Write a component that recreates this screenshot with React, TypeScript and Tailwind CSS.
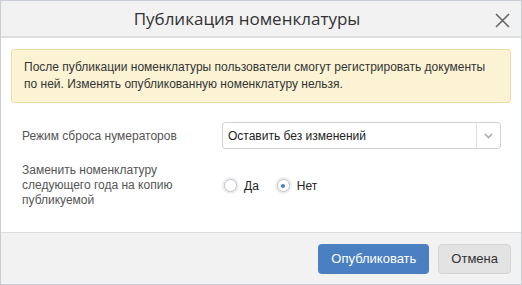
import { useState } from "react";

export default function App() {
  const [replace, setReplace] = useState<"yes" | "no">("no");

  return (
    <div className="w-[522px] h-[285px] flex flex-col bg-white border border-[#c9cdd5] font-['Liberation_Sans',Arial,sans-serif] text-[#333]">
      <div className="h-[37px] shrink-0 flex items-center justify-center relative pr-[28px] bg-[#f2f2f2] border-b-2 border-[#dedede]">
        <span className="font-['Open_Sans',sans-serif] text-[17px] text-[#333] mt-px">Публикация номенклатуры</span>
        <button className="absolute right-[10px] top-[10px] w-[18px] h-[18px] flex items-center justify-center text-[#666]">
          <svg width="15" height="15" viewBox="0 0 15 15" fill="none" stroke="currentColor" strokeWidth="1.6">
            <path d="M1 1 L14 14 M14 1 L1 14" />
          </svg>
        </button>
      </div>

      <div className="flex-1 px-[10px] pt-[11px]">
        <div className="rounded-[3px] border border-[#efdca4] bg-[#fcf3d5] px-[12px] pt-[9px] pb-[9px] text-[12px] leading-[17px] text-[#333]">
          После публикации номенклатуры пользователи смогут регистрировать документы по ней. Изменять опубликованную номенклатуру нельзя.
        </div>

        <div className="flex items-center mt-[19px] pl-[11px] pr-[10px]">
          <div className="w-[200px] text-[12px] text-[#555]">Режим сброса нумераторов</div>
          <div className="flex-1 h-[27px] flex items-center border border-[#d3d3d3] rounded-[3px] bg-white">
            <span className="flex-1 pl-[5px] text-[12px] text-[#222]">Оставить без изменений</span>
            <div className="w-[24px] h-full border-l border-[#e0e0e0] flex items-center justify-center text-[#aaa]">
              <svg width="9" height="6" viewBox="0 0 9 6" fill="none" stroke="currentColor" strokeWidth="1.6">
                <path d="M1 1 L4.5 4.5 L8 1" />
              </svg>
            </div>
          </div>
        </div>

        <div className="flex items-center mt-[14px] pl-[11px] pr-[10px]">
          <div className="w-[200px] text-[12px] leading-[15px] text-[#555]">
            Заменить номенклатуру
            <br />
            следующего года на копию
            <br />
            публикуемой
          </div>
          <div className="flex items-center gap-[16px] text-[12px] text-[#222]">
            <label className="flex items-center gap-[5px] cursor-pointer" onClick={() => setReplace("yes")}>
              <span className="w-[17px] h-[17px] rounded-full bg-[#eceef2] flex items-center justify-center">
                <span className="w-[13px] h-[13px] rounded-full border border-[#c4c4c4] bg-white flex items-center justify-center">
                  {replace === "yes" && <span className="w-[4px] h-[4px] rounded-full bg-[#4a7fc1]" />}
                </span>
              </span>
              Да
            </label>
            <label className="flex items-center gap-[5px] cursor-pointer" onClick={() => setReplace("no")}>
              <span className="w-[17px] h-[17px] rounded-full bg-[#eceef2] flex items-center justify-center">
                <span className="w-[13px] h-[13px] rounded-full border border-[#c4c4c4] bg-white flex items-center justify-center">
                  {replace === "no" && <span className="w-[4px] h-[4px] rounded-full bg-[#4a7fc1]" />}
                </span>
              </span>
              Нет
            </label>
          </div>
        </div>
      </div>

      <div className="h-[52px] shrink-0 flex items-center justify-end gap-[9px] pr-[10px] bg-[#f2f2f2] border-t border-[#dcdcdc]">
        <button className="h-[30px] px-[13px] rounded-[4px] bg-[#4a7fc1] text-white text-[13px]">Опубликовать</button>
        <button className="h-[30px] px-[12px] rounded-[4px] bg-[#e3e3e3] border border-[#d4d4d4] text-[#333] text-[13px]">Отмена</button>
      </div>
    </div>
  );
}
